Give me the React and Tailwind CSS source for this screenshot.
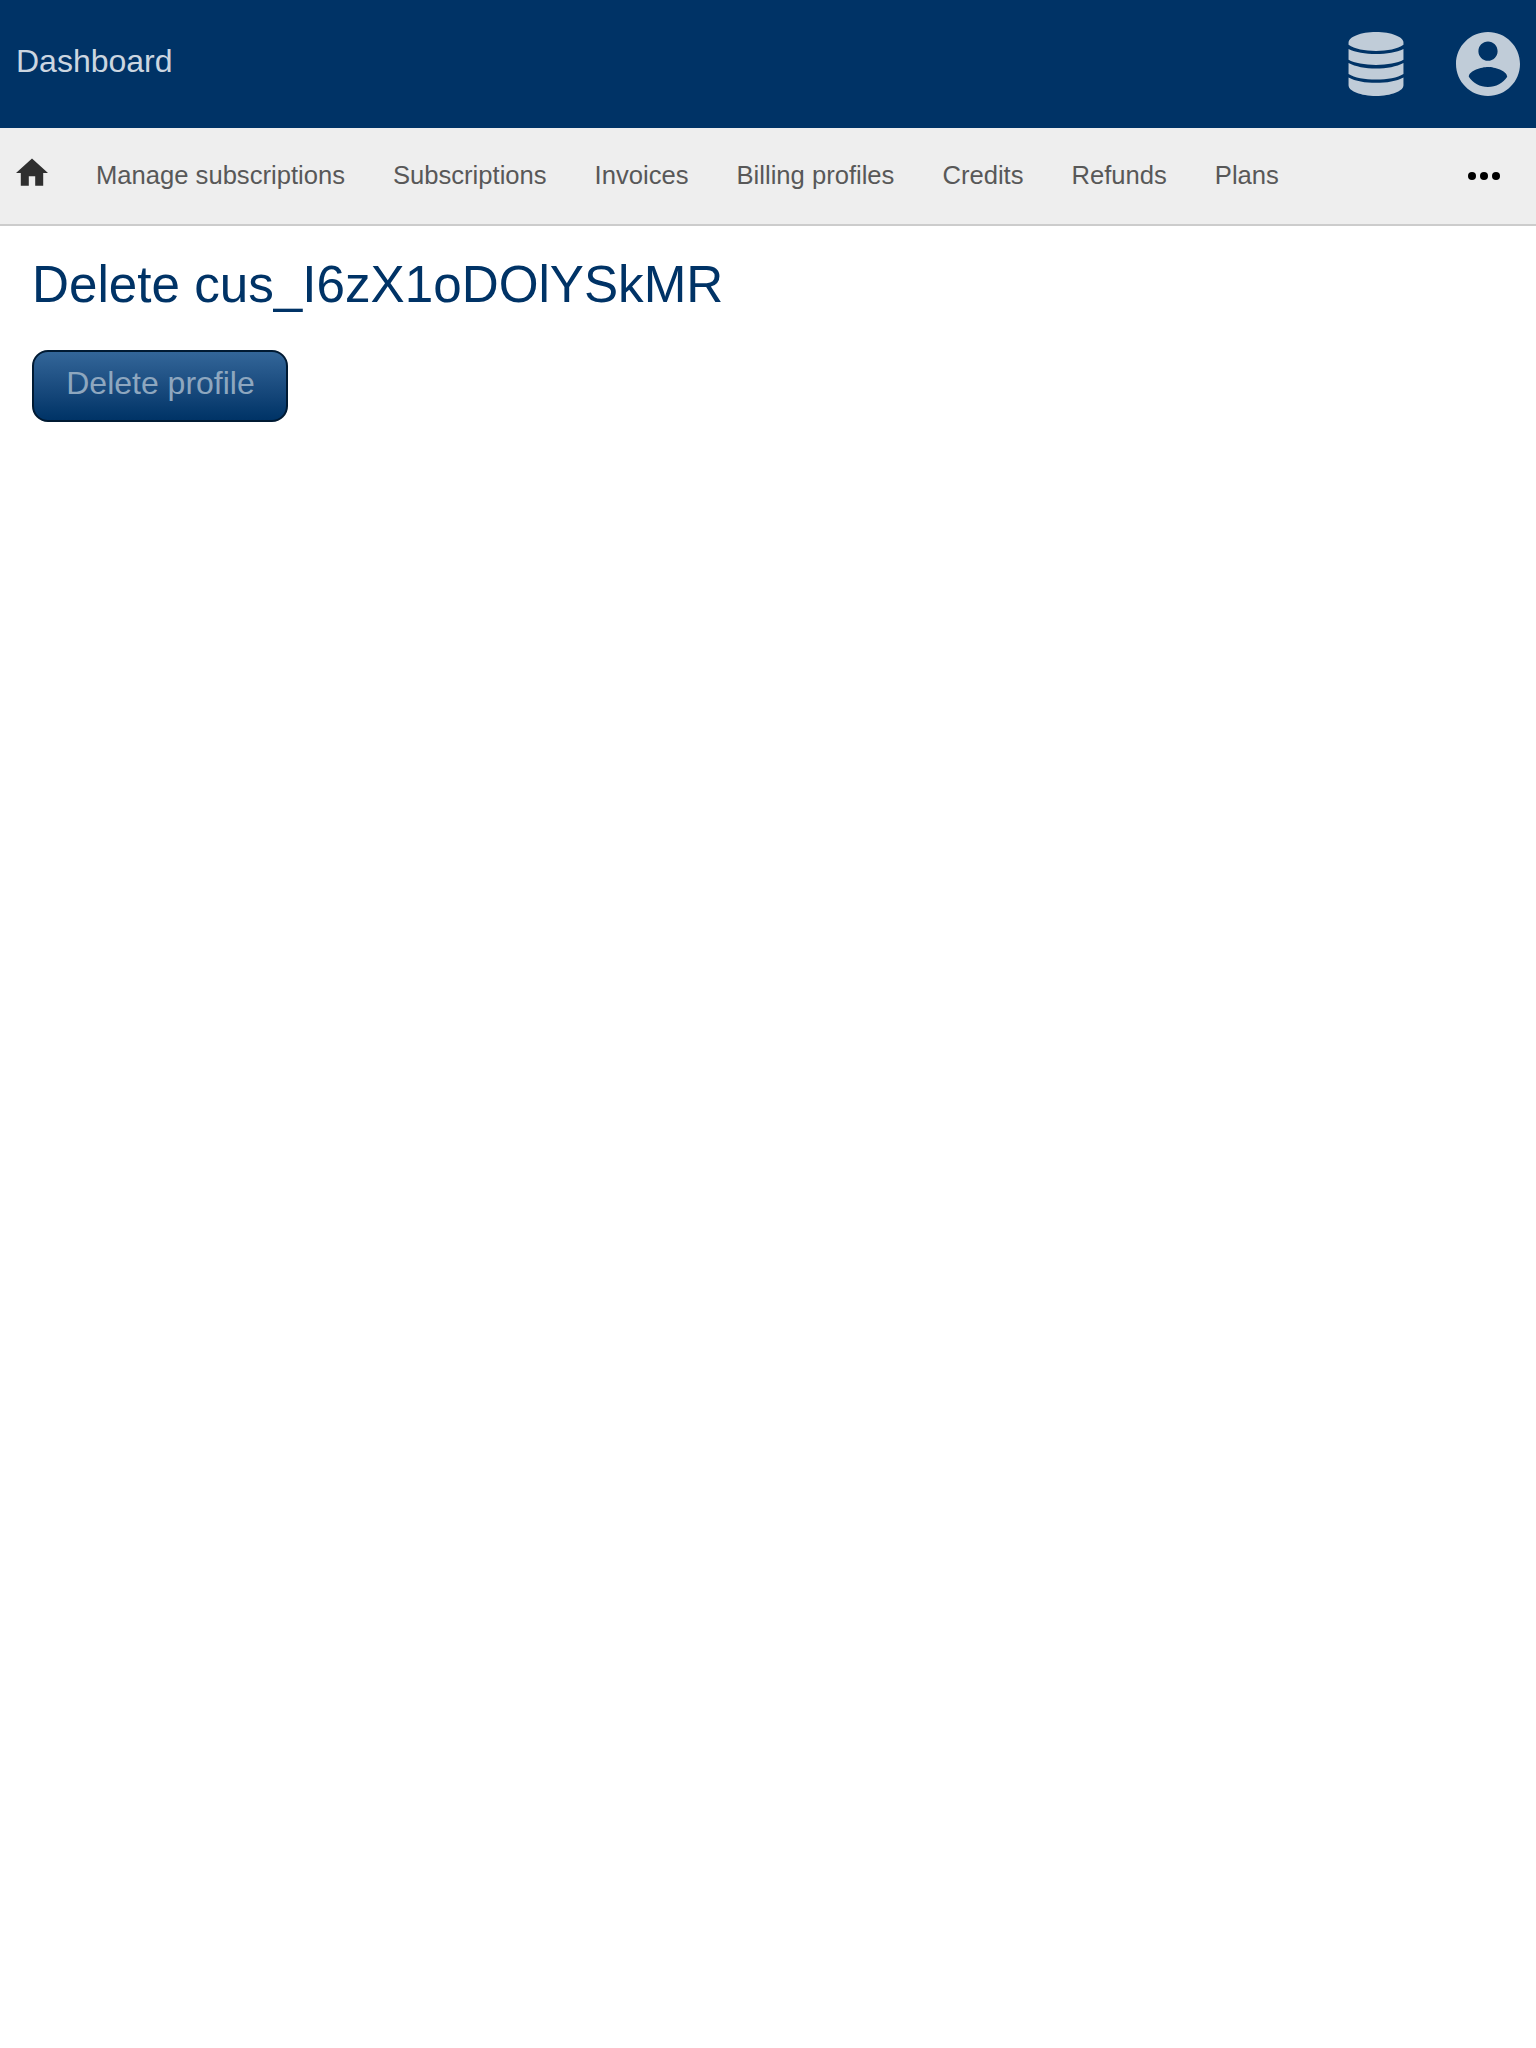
const navItems = ["Manage subscriptions", "Subscriptions", "Invoices", "Billing profiles", "Credits", "Refunds", "Plans"];

function DatabaseIcon() {
  return (
    <svg className="h-16 w-14" viewBox="-0.55 0 57.1 64" preserveAspectRatio="none" fill="currentColor">
      <path d="M0 10.700C0 4.800 12.500 0 28 0s28 4.800 28 10.700v2C50 16.800 39.500 18.900 28 18.900S6 16.800 0 12.700z" />
      <path d="M0 17C7 20.300 17 22 28 22s21-1.700 28-5v10.800C50 31.100 39.500 32.900 28 32.900S6 31.100 0 27.800z" />
      <path d="M0 31C7 34.700 17 36.500 28 36.500s21-1.800 28-5.500v10.900C50 45.700 39.500 47.500 28 47.500S6 45.700 0 41.900z" />
      <path d="M0 45.400C7 49.100 17 50.800 28 50.800s21-1.700 28-5.400v7.900C56 59.200 43.500 64 28 64S0 59.200 0 53.300z" />
    </svg>
  );
}

function AccountIcon() {
  return (
    <svg className="size-16" viewBox="2 2 20 20" fill="currentColor">
      <path d="M12 2C6.480 2 2 6.480 2 12s4.480 10 10 10 10-4.480 10-10S17.520 2 12 2zm0 3c1.660 0 3 1.340 3 3s-1.340 3-3 3-3-1.340-3-3 1.340-3 3-3zm0 14.200c-2.500 0-4.710-1.280-6-3.220.03-1.990 4-3.080 6-3.080 1.990 0 5.970 1.090 6 3.080-1.290 1.940-3.500 3.220-6 3.220z" />
    </svg>
  );
}

export default function App() {
  return (
    <div className="min-h-[2048px] bg-white font-['Liberation_Sans',Arial,sans-serif]">
      <header className="flex h-32 justify-between bg-[#003366] px-4 text-[#c0ccd8]">
        <a className="pt-[37px] text-[32px] leading-[48px] text-[#ccd6e0]">Dashboard</a>
        <div className="flex items-center gap-[52px]">
          <DatabaseIcon />
          <AccountIcon />
        </div>
      </header>
      <nav className="flex h-[98px] items-center border-b-2 border-[#cccccc] bg-[#eeeeee] pr-9 pl-4 text-[25.6px] text-[#585858]">
        <svg className="mr-12 mb-1.5 size-8 text-[#2f2f2f]" viewBox="2 2 20 20" fill="currentColor">
          <path d="M10 20v-6h4v6h5v-8h3L12 3 2 12h3v8z" />
        </svg>
        <div className="flex gap-12 pb-0.5 whitespace-nowrap">
          {navItems.map((item) => (
            <a key={item}>{item}</a>
          ))}
        </div>
        <svg className="ml-auto h-2 w-8 text-black" viewBox="0 0 32 8" fill="currentColor">
          <circle cx="4" cy="4" r="4" />
          <circle cx="16" cy="4" r="4" />
          <circle cx="28" cy="4" r="4" />
        </svg>
      </nav>
      <main className="flex flex-col items-start px-8 pt-[29px]">
        <h1 className="text-[51.2px] leading-[60px] text-[#003366]">Delete cus_I6zX1oDOlYSkMR</h1>
        <button className="mt-[35px] h-[72px] w-64 rounded-2xl border-2 border-[#001a33] bg-linear-to-b from-[#336699] to-[#003366] pb-1.5 pl-px text-[32px] leading-[36px] whitespace-nowrap text-[#8ea7bf]">
          Delete profile
        </button>
      </main>
    </div>
  );
}
